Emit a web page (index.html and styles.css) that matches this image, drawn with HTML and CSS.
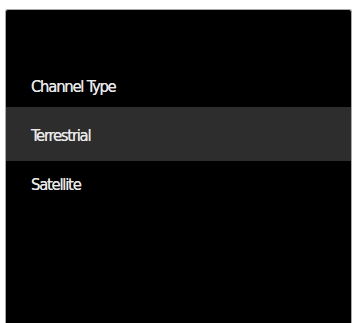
FILE: index.html
```html
<!DOCTYPE html>
<html>
<head>
<meta charset="utf-8">
<link rel="stylesheet" href="styles.css">
</head>
<body>
<div class="panel">
  <div class="item title">Channel Type</div>
  <div class="item selected">Terrestrial</div>
  <div class="item">Satellite</div>
</div>
</body>
</html>
```
FILE: styles.css
```css
html, body {
  margin: 0;
  padding: 0;
  background: #ffffff;
}
body {
  padding: 9px 1px 0 5px;
  height: 323px;
  box-sizing: border-box;
  overflow: hidden;
}
.panel {
  background: #000000;
  height: 100%;
  border: 1px solid #a8a8a8;
  border-bottom: none;
  border-radius: 3px 3px 0 0;
  padding-top: 46px;
  box-sizing: border-box;
  display: flex;
  flex-direction: column;
  font-family: "DejaVu Sans Condensed", "DejaVu Sans", sans-serif;
  font-stretch: condensed;
  font-size: 16.5px;
  color: #e8e8e8;
}
.item {
  height: 46px;
  box-sizing: border-box;
  display: flex;
  align-items: center;
  padding-left: 25px;
  letter-spacing: -1.25px;
  text-shadow: 0 0 0.5px #e8e8e8;
}
.title {
  height: 51px;
  padding-top: 9px;
}
.selected {
  background: #2d2d2d;
  height: 54px;
  padding-top: 3px;
}
```
